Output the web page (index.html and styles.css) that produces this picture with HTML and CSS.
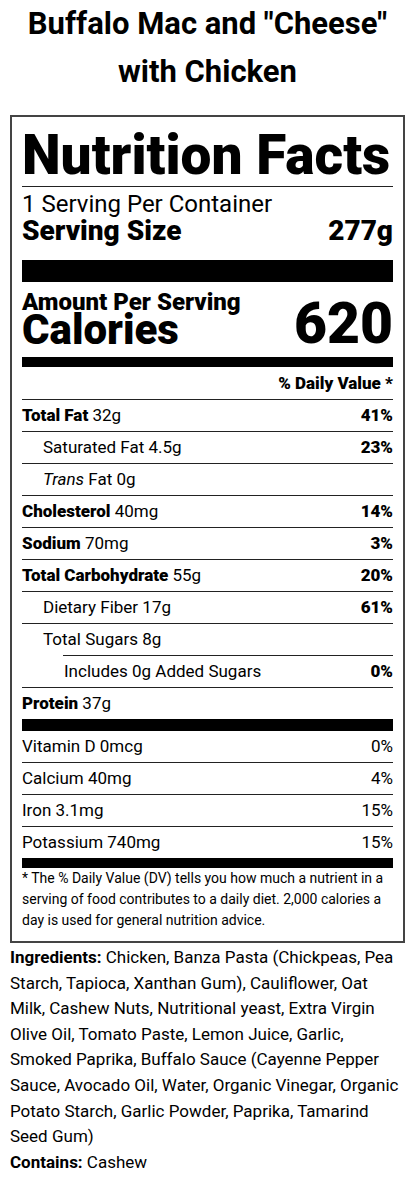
FILE: index.html
```html
<!DOCTYPE html>
<html lang="en">
<head>
  <meta charset="UTF-8" />
  <title>Buffalo Mac and "Cheese" with Chicken</title>
  <link rel="stylesheet" href="styles.css">
</head>
<body>
  <div class="page">
    <h1 class="dish">Buffalo Mac and "Cheese" with Chicken</h1>

    <!-- Nutrition label -->
    <section class="label">
      <h2 class="label-title">Nutrition Facts</h2>
      <div class="servings">1 Serving Per Container</div>
      <div class="serving-size"><span>Serving Size</span><span>277g</span></div>

      <div class="bar bar-lg"></div>

      <div class="calories">
        <div>
          <div class="amount">Amount Per Serving</div>
          <div class="cal-label">Calories</div>
        </div>
        <div class="cal-value">620</div>
      </div>

      <div class="bar bar-md"></div>

      <div class="dv-head">% Daily Value *</div>

      <div class="row"><span><b>Total Fat</b> 32g</span><b>41%</b></div>
      <div class="row sub"><span>Saturated Fat 4.5g</span><b>23%</b></div>
      <div class="row sub"><span><i>Trans</i> Fat 0g</span></div>
      <div class="row"><span><b>Cholesterol</b> 40mg</span><b>14%</b></div>
      <div class="row"><span><b>Sodium</b> 70mg</span><b>3%</b></div>
      <div class="row"><span><b>Total Carbohydrate</b> 55g</span><b>20%</b></div>
      <div class="row sub"><span>Dietary Fiber 17g</span><b>61%</b></div>
      <div class="row sub no-rule"><span>Total Sugars 8g</span></div>
      <div class="added-rule"></div>
      <div class="row sub2"><span>Includes 0g Added Sugars</span><b>0%</b></div>
      <div class="row no-rule"><span><b>Protein</b> 37g</span></div>

      <div class="bar bar-protein"></div>

      <div class="row"><span>Vitamin D 0mcg</span><span>0%</span></div>
      <div class="row"><span>Calcium 40mg</span><span>4%</span></div>
      <div class="row"><span>Iron 3.1mg</span><span>15%</span></div>
      <div class="row no-rule"><span>Potassium 740mg</span><span>15%</span></div>

      <div class="bar bar-md"></div>

      <p class="footnote">* The % Daily Value (DV) tells you how much a nutrient in a serving of food contributes to a daily diet. 2,000 calories a day is used for general nutrition advice.</p>
    </section>

    <p class="ingredients first"><b>Ingredients:</b> Chicken, Banza Pasta (Chickpeas, Pea Starch, Tapioca, Xanthan Gum), Cauliflower, Oat Milk, Cashew Nuts, Nutritional yeast, Extra Virgin Olive Oil, Tomato Paste, Lemon Juice, Garlic, Smoked Paprika, Buffalo Sauce (Cayenne Pepper Sauce, Avocado Oil, Water, Organic Vinegar, Organic Potato Starch, Garlic Powder, Paprika, Tamarind Seed Gum)</p>
    <p class="ingredients"><b>Contains:</b> Cashew</p>
  </div>
</body>
</html>
```

FILE: styles.css
```css
* {
  margin: 0;
  padding: 0;
  box-sizing: border-box;
}

html, body {
  background: #fff;
  color: #000;
  font-family: Roboto, 'Liberation Sans', sans-serif;
}

.page {
  padding: 0 11px 0 10px;
}

.dish {
  font-size: 31px;
  font-weight: 700;
  line-height: 48px;
  text-align: center;
  margin-bottom: 19px;
}

.label {
  border: 2px solid #444;
  padding: 9px 10px 10px;
}

.label-title {
  font-size: 55px;
  font-weight: 900;
  line-height: 58px;
  padding-bottom: 2px;
  border-bottom: 1px solid #222;
}

.servings {
  font-size: 24px;
  line-height: 28px;
  margin-top: 3px;
}

.serving-size {
  display: flex;
  justify-content: space-between;
  font-size: 28px;
  font-weight: 900;
  line-height: 26px;
}

.bar {
  background: #000;
}

.bar-lg {
  height: 22px;
  margin-top: 16px;
}

.bar-md {
  height: 10px;
}

.bar-protein {
  height: 12px;
}

.calories {
  display: flex;
  justify-content: space-between;
  align-items: flex-end;
  padding: 7px 0 13px;
}

.amount {
  font-size: 24px;
  font-weight: 900;
  line-height: 26px;
}

.cal-label {
  font-size: 42px;
  font-weight: 900;
  line-height: 29px;
}

.cal-value {
  font-size: 57px;
  font-weight: 900;
  line-height: 40px;
}

.dv-head {
  text-align: right;
  font-size: 17px;
  font-weight: 900;
  line-height: 31px;
  padding-top: 1px;
  border-bottom: 1px solid #222;
}

.row {
  display: flex;
  justify-content: space-between;
  font-size: 17px;
  line-height: 31px;
  border-bottom: 1px solid #222;
}

.row b {
  font-weight: 900;
}

.row.sub {
  padding-left: 21px;
}

.row.sub2 {
  padding-left: 42px;
}

.row.no-rule {
  border-bottom: none;
}

.added-rule {
  height: 1px;
  margin-left: 41px;
  background: #222;
}

.footnote {
  font-size: 14px;
  line-height: 21px;
}

.ingredients {
  font-size: 17px;
  line-height: 25.6px;
}

.ingredients.first {
  margin-top: 2px;
}
```
